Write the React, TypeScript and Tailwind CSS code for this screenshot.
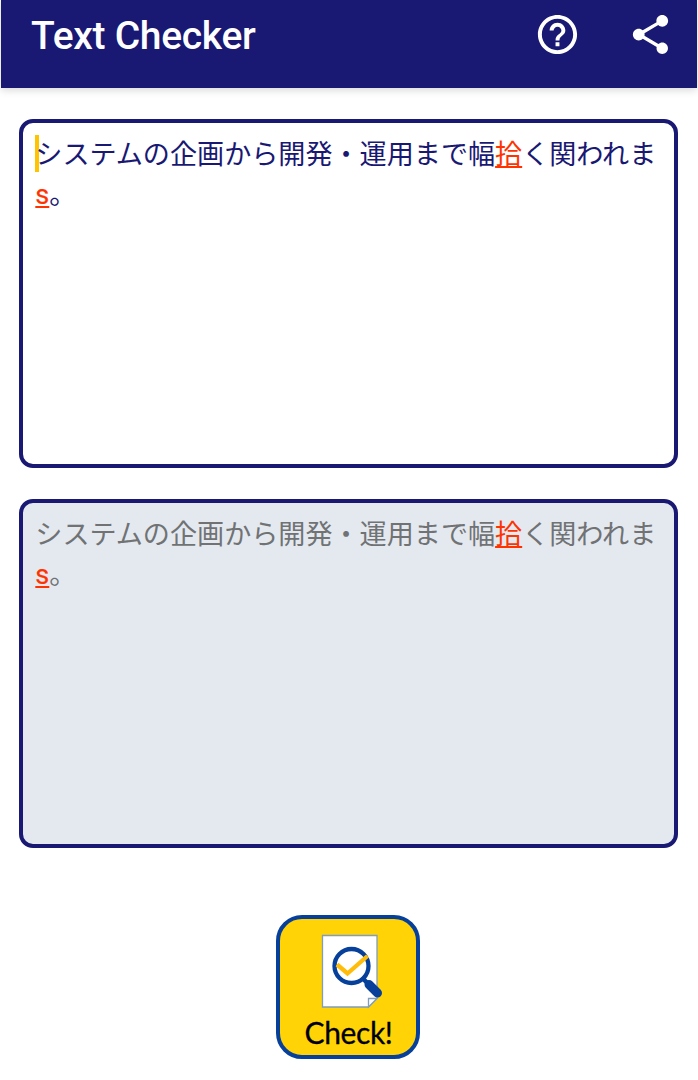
import React from "react";

function HelpIcon() {
  return (
    <svg viewBox="0 0 24 24" className="h-[47px] w-[47px]" fill="white" aria-hidden="true">
      <path d="M11 18h2v-2h-2v2zm1-16C6.48 2 2 6.48 2 12s4.48 10 10 10 10-4.48 10-10S17.52 2 12 2zm0 18c-4.41 0-8-3.59-8-8s3.59-8 8-8 8 3.59 8 8-3.59 8-8 8zm0-14c-2.21 0-4 1.79-4 4h2c0-1.1.9-2 2-2s2 .9 2 2c0 2-3 1.750-3 5h2c0-2.250 3-2.500 3-5 0-2.210-1.790-4-4-4z" />
    </svg>
  );
}

function ShareIcon() {
  return (
    <svg viewBox="0 0 24 24" className="h-[47px] w-[47px]" fill="white" aria-hidden="true">
      <path d="M18 16.080c-.76 0-1.440.3-1.960.77L8.910 12.700c.05-.23.09-.46.09-.7s-.04-.47-.09-.7l7.050-4.110c.54.5 1.250.81 2.040.81 1.660 0 3-1.340 3-3s-1.340-3-3-3-3 1.340-3 3c0 .24.04.47.09.7L8.040 9.810C7.500 9.310 6.790 9 6 9c-1.660 0-3 1.340-3 3s1.340 3 3 3c.79 0 1.500-.31 2.040-.81l7.120 4.160c-.05.21-.08.43-.08.65 0 1.610 1.310 2.920 2.920 2.920s2.920-1.310 2.920-2.920-1.310-2.920-2.920-2.920z" />
    </svg>
  );
}

function DocumentIcon() {
  return (
    <svg viewBox="0 0 64 76" className="h-[76px] w-[64px]" aria-hidden="true">
      <path d="M2.500 2.500H57V65.500L48.500 74H2.500Z" fill="white" stroke="#7f9dbd" strokeWidth="1.300" />
      <path d="M48.500 74V65.500H57Z" fill="white" stroke="#7f9dbd" strokeWidth="1.300" />
      <path d="M43 45.500L50 53" stroke="#06409b" strokeWidth="4.500" />
      <path d="M49 51.500L57.500 60" stroke="#06409b" strokeWidth="9" strokeLinecap="round" />
      <circle cx="31.500" cy="33" r="17" fill="white" stroke="#06409b" strokeWidth="4.300" />
      <path d="M17 31.500L27.500 40.500L47.500 23" fill="none" stroke="#ffbd0a" strokeWidth="4.300" />
    </svg>
  );
}

function Sentence() {
  return (
    <>
      システムの企画から開発・運用まで幅
      <span className="text-[#ff3300] underline decoration-[1.5px] underline-offset-[2px] [text-decoration-skip-ink:none]">拾</span>
      く関われま
      <br />
      <span className="text-[#ff3300] underline decoration-[1.5px] underline-offset-[2px] [-webkit-text-stroke:0.2px_#ff3300]">s</span>。
    </>
  );
}

const panel =
  "h-[349px] w-[659px] rounded-[14px] border-4 border-[#191873] pl-[12.3px] pt-[11.5px] text-[27.1px] leading-[40px] whitespace-nowrap font-[Roboto,'Noto_Sans_CJK_JP',sans-serif]";

export default function App() {
  return (
    <div className="h-[1080px] w-[698px] overflow-hidden bg-white" lang="ja">
      <header className="mx-px flex h-[88px] items-start justify-between bg-[#191873] pr-[23px] pl-[30px] shadow-[0_2px_8px_rgba(0,0,0,0.16)]">
        <h1 className="pt-[13px] font-[Roboto,sans-serif] text-[39px] leading-[47px] font-medium tracking-[-0.3px] text-white">
          Text Checker
        </h1>
        <div className="flex gap-[46px] pt-[11px]">
          <button aria-label="Help"><HelpIcon /></button>
          <button aria-label="Share"><ShareIcon /></button>
        </div>
      </header>
      <main className="flex flex-col pt-[31px] pl-[19px]">
        <section className={`${panel} relative bg-white text-[#191873]`}>
          <span className="absolute top-[12px] left-[12px] h-[37px] w-1 bg-[#ffc400]" />
          <p className="relative"><Sentence /></p>
        </section>
        <section className={`${panel} mt-[31px] bg-[#e4e9f0] text-[#707274]`}>
          <p><Sentence /></p>
        </section>
        <button className="mt-[67px] ml-[257px] flex h-[144px] w-[144px] flex-col items-center rounded-[26px] border-4 border-[#06409b] bg-[#ffd305] pt-[14px]">
          <span className="pl-[7px]"><DocumentIcon /></span>
          <span className="mt-[3px] pl-px font-[Lato,sans-serif] text-[30px] leading-[40px] tracking-[-0.4px] text-black [-webkit-text-stroke:0.3px_black]">
            Check!
          </span>
        </button>
      </main>
    </div>
  );
}
